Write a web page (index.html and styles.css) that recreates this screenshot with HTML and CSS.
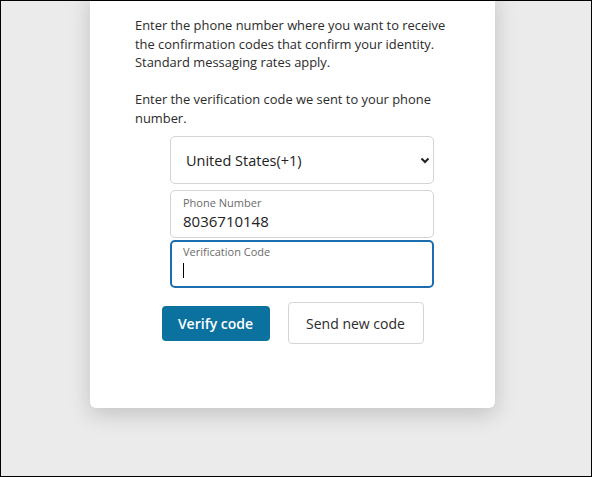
FILE: index.html
```html
<!DOCTYPE html>
<html lang="en">
<head>
<meta charset="utf-8">
<title>Verify phone</title>
<link rel="stylesheet" href="styles.css">
</head>
<body>
<div class="frame">
  <div class="card">
    <p class="intro">Enter the phone number where you want to receive the confirmation codes that confirm your identity. Standard messaging rates apply.</p>
    <p class="intro">Enter the verification code we sent to your phone number.</p>
    <form class="form">
      <div class="select-box">
        <span class="select-value">United States(+1)</span>
        <svg class="chevron" width="10" height="7" viewBox="0 0 10 7"><path d="M1.5 1.5 L5 5 L8.5 1.5" fill="none" stroke="#222" stroke-width="2"/></svg>
      </div>
      <div class="field">
        <span class="field-label">Phone Number</span>
        <span class="field-value">8036710148</span>
      </div>
      <div class="field field-focus">
        <span class="field-label">Verification Code</span>
        <span class="field-value"><span class="caret"></span></span>
      </div>
    </form>
    <div class="actions">
      <button type="button" class="btn btn-primary">Verify code</button>
      <button type="button" class="btn btn-secondary">Send new code</button>
    </div>
  </div>
</div>
</body>
</html>
```
FILE: styles.css
```css
html, body {
  margin: 0;
  padding: 0;
}
body {
  font-family: "Open Sans", "Noto Sans", sans-serif;
  color: #2b2b2b;
}
.frame {
  width: 592px;
  height: 477px;
  box-sizing: border-box;
  border: 1px solid #000;
  background: #ebebeb;
  overflow: hidden;
}
.card {
  width: 405px;
  box-sizing: border-box;
  margin-left: 89px;
  margin-top: -10px;
  padding: 25px 40px 64px 45px;
  background: #fff;
  border-radius: 6px;
  box-shadow: 0 6px 22px rgba(0, 0, 0, 0.18);
}
.intro {
  margin: 0 0 18.5px 0;
  font-size: 12.9px;
  line-height: 18.6px;
}
.intro + .intro {
  margin-bottom: 9px;
}
.form {
  margin: 0 0 0 35px;
  width: 264px;
  display: flex;
  flex-direction: column;
}
.select-box {
  height: 48px;
  box-sizing: border-box;
  border: 1px solid #d4d4d4;
  border-radius: 5px;
  display: flex;
  align-items: center;
  justify-content: space-between;
  padding: 0 3px 0 15px;
  margin-bottom: 6px;
}
.select-value {
  font-size: 14.5px;
  color: #222;
}
.chevron {
  margin-right: 0;
}
.field {
  height: 48px;
  box-sizing: border-box;
  border: 1px solid #d4d4d4;
  border-radius: 5px;
  padding: 5px 12px 0 12px;
  display: flex;
  flex-direction: column;
  margin-bottom: 2px;
}
.field-focus {
  border: 2px solid #1c6db0;
  padding: 3px 11px 0 11px;
}
.field-label {
  font-size: 11px;
  line-height: 14px;
  color: #6b6b6b;
}
.field-value {
  font-size: 15px;
  line-height: 22px;
  color: #222;
  height: 22px;
  display: flex;
  align-items: center;
}
.caret {
  display: inline-block;
  width: 1px;
  height: 15px;
  background: #000;
}
.actions {
  margin-top: 12px;
  margin-right: 5px;
  display: flex;
  justify-content: center;
  align-items: center;
  gap: 18px;
}
.btn {
  font-family: inherit;
  font-size: 14px;
  border-radius: 4px;
  cursor: pointer;
}
.btn-primary {
  width: 108px;
  height: 35px;
  background: #0b72a0;
  color: #fff;
  border: none;
  font-weight: 600;
}
.btn-secondary {
  width: 136px;
  height: 42px;
  background: #fff;
  color: #2b2b2b;
  border: 1px solid #d4d4d4;
}
```
